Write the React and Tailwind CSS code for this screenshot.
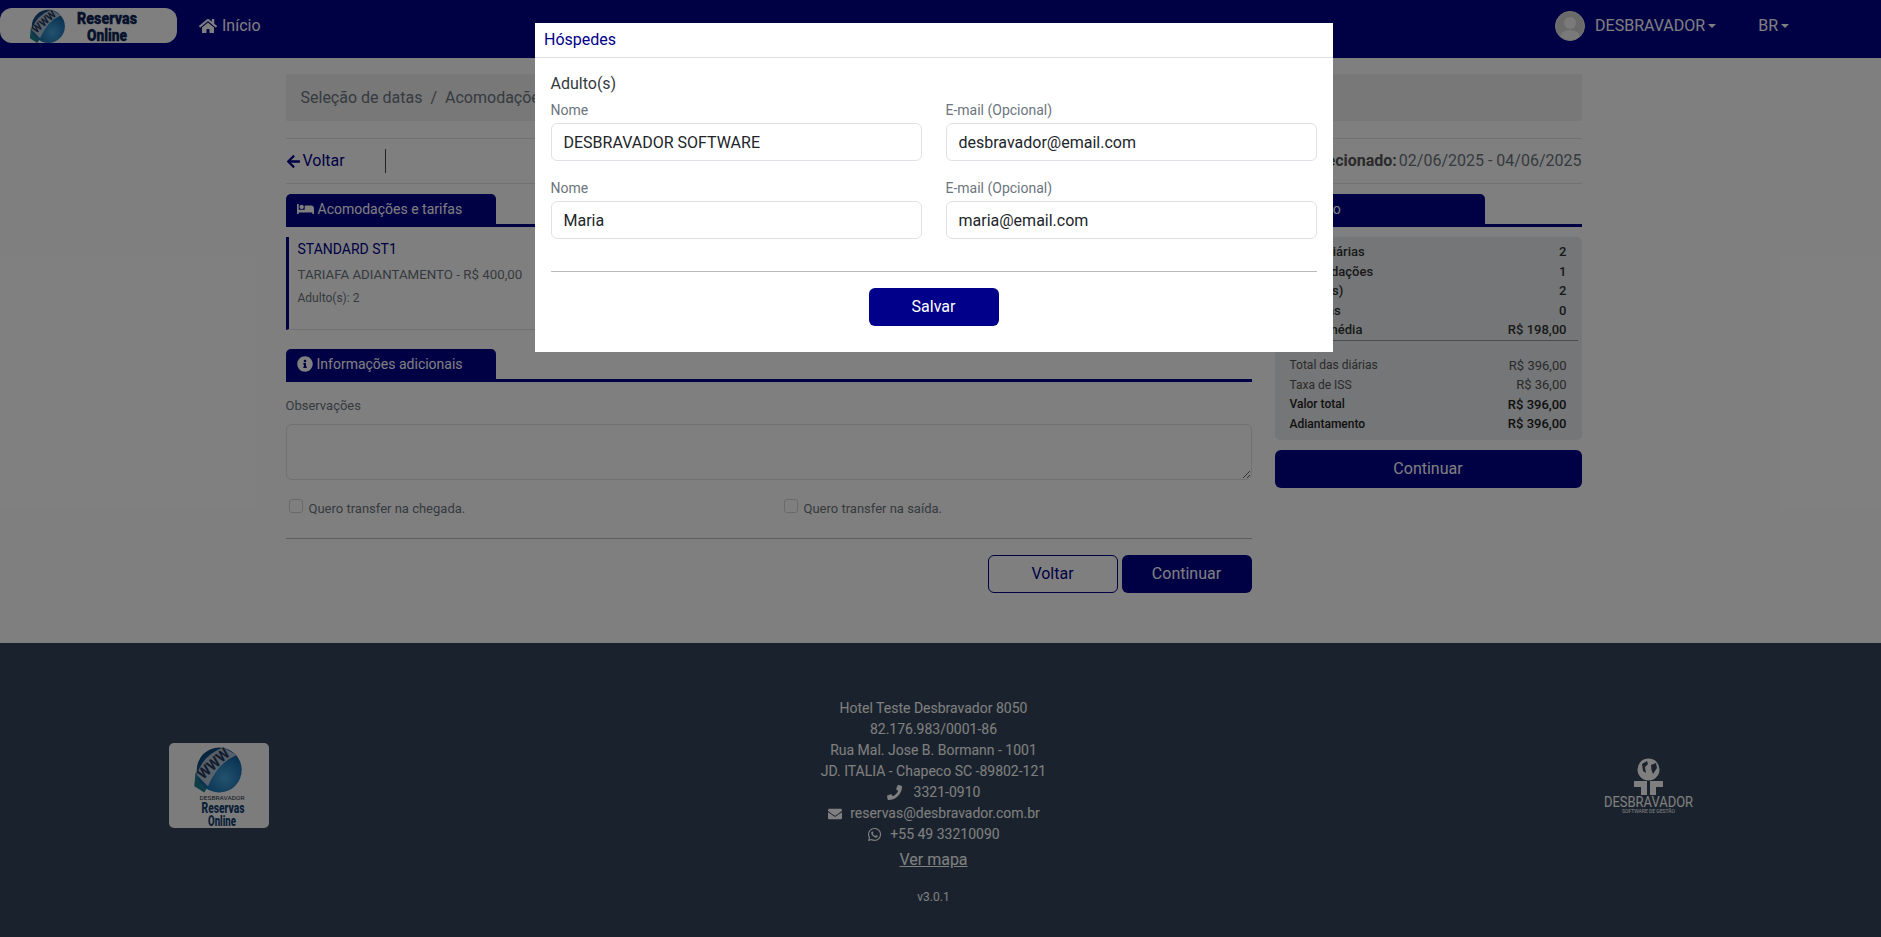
import React from "react";
import { FaHome, FaBed, FaInfoCircle, FaArrowLeft, FaPhone, FaEnvelope, FaWhatsapp } from "react-icons/fa";

function Globe({ id }) {
  return (
    <g>
      <defs>
        <radialGradient id={id} cx="0.62" cy="0.68" r="0.72">
          <stop offset="0" stopColor="#48a6dc" />
          <stop offset="0.6" stopColor="#1a6fae" />
          <stop offset="1" stopColor="#0f3f72" />
        </radialGradient>
      </defs>
      <path d="M2 22 L1 33 L9 38 L14 30 Z" fill="#1c7f8f" />
      <circle cx="21" cy="20" r="18" fill={`url(#${id})`} />
      <path d="M3 24 Q8 8 24 2 L35 8 Q20 14 12 33 Z" fill="#d6dae0" opacity="0.8" />
      <text x="0" y="0" transform="translate(8 28) rotate(-42)" fontFamily="Roboto, sans-serif" fontSize="12" fontWeight="700" fill="#26395c" textLength="30" lengthAdjust="spacingAndGlyphs">WWW</text>
    </g>
  );
}

function HeaderLogo() {
  return (
    <div className="w-[177px] h-[35px] bg-white rounded-[12px] flex items-center">
      <svg width="177" height="35" viewBox="0 0 177 35">
        <g transform="translate(29 0) scale(0.92)"><Globe id="g1" /></g>
        <text x="107" y="16" textAnchor="middle" fontFamily="Roboto, sans-serif" fontSize="17" fontWeight="900" fill="#0d2458" stroke="#0d2458" strokeWidth="0.4" textLength="60" lengthAdjust="spacingAndGlyphs">Reservas</text>
        <text x="107" y="32.5" textAnchor="middle" fontFamily="Roboto, sans-serif" fontSize="17" fontWeight="900" fill="#0d2458" stroke="#0d2458" strokeWidth="0.4" textLength="40" lengthAdjust="spacingAndGlyphs">Online</text>
      </svg>
    </div>
  );
}

function FooterLogo() {
  return (
    <div className="w-[100px] h-[85px] bg-[#f8f9fb] rounded-[5px] mb-[9px]">
      <svg width="100" height="85" viewBox="0 0 100 85">
        <g transform="translate(24 2) scale(1.25)"><Globe id="g2" /></g>
        <text x="53" y="57" textAnchor="middle" fontFamily="Roboto, sans-serif" fontSize="6" fill="#1c2a3c" textLength="45" lengthAdjust="spacingAndGlyphs">DESBRAVADOR</text>
        <text x="54" y="70" textAnchor="middle" fontFamily="Roboto, sans-serif" fontSize="15" fontWeight="900" fill="#14406f" textLength="43" lengthAdjust="spacingAndGlyphs">Reservas</text>
        <text x="53" y="83" textAnchor="middle" fontFamily="Roboto, sans-serif" fontSize="15" fontWeight="900" fill="#14406f" textLength="28" lengthAdjust="spacingAndGlyphs">Online</text>
      </svg>
    </div>
  );
}

function DesbravadorLogo() {
  return (
    <div className="w-[92px] h-[57px] mb-[9px] mr-[3px]">
      <svg width="92" height="57" viewBox="0 0 92 57">
        <circle cx="45.5" cy="12.5" r="11" fill="#fff" />
        <path d="M39 7 L44 4 L45 7 L42 10 L43 16 L40 14 Z M48 8 L53 6 L54 11 L50 17 L48.5 13 Z" fill="#34465a" />
        <path d="M31 24 H44 V38 H38 V30 H31 Z M47 24 H60 V30 H53 V38 H47 Z" fill="#fff" />
        <text x="45.5" y="50" textAnchor="middle" fontFamily="Roboto, sans-serif" fontSize="14" fill="#fff" textLength="89" lengthAdjust="spacingAndGlyphs">DESBRAVADOR</text>
        <text x="45.5" y="56" textAnchor="middle" fontFamily="Roboto, sans-serif" fontSize="5" fill="#fff" textLength="53" lengthAdjust="spacingAndGlyphs">SOFTWARE DE GESTÃO</text>
      </svg>
    </div>
  );
}

function Caret() {
  return <span className="inline-block ml-[3px] w-0 h-0 border-x-[4px] border-x-transparent border-t-[4px] border-t-white align-middle" />;
}

function Tab({ icon, label }) {
  return (
    <div className="border-b-[3px] border-[#00008b] h-[33px]">
      <div className="w-[210px] h-[30px] bg-[#00008b] rounded-t-[5px] flex items-center pl-[11px] gap-[4px] text-white text-[14px]">
        {icon}
        <span>{label}</span>
      </div>
    </div>
  );
}

function Row({ a, b, cls, aCls }) {
  return (
    <div className={"flex justify-between items-center h-[19.5px] text-[13px] " + cls}>
      <span className={aCls}>{a}</span>
      <span>{b}</span>
    </div>
  );
}

function Field({ label, value }) {
  return (
    <div>
      <div className="text-[14px] leading-[21px] text-[#6c757d] mb-[2px]">{label}</div>
      <input readOnly value={value} className="w-full h-[38px] border border-[#dee2e6] rounded-[6px] px-[12px] text-[16px] text-[#212529] bg-white outline-none" />
    </div>
  );
}

export default function App() {
  return (
    <div className="relative bg-white h-[937px] overflow-hidden text-[#212529] font-['Roboto',sans-serif]">
      <header className="h-[58px] bg-[#00008b]">
        <div className="w-[1867px] h-[50px] flex items-center text-white">
          <HeaderLogo />
          <div className="ml-[22px] mt-[1px] flex items-center gap-[5px] text-[16px]">
            <FaHome className="w-[18px] h-[16px]" />
            <span>Início</span>
          </div>
          <div className="ml-auto mt-[1px] flex items-center text-[16px] mr-[78px]">
            <div className="w-[30px] h-[30px] rounded-full bg-[#d5d5d5] border border-[#eee] overflow-hidden">
              <svg width="28" height="28" viewBox="0 0 28 28">
                <circle cx="14" cy="11" r="6" fill="#f5f5f5" />
                <ellipse cx="14" cy="25" rx="10" ry="7" fill="#f5f5f5" />
              </svg>
            </div>
            <span className="ml-[10px]">DESBRAVADOR</span>
            <Caret />
            <span className="ml-[42px]">BR</span>
            <Caret />
          </div>
        </div>
      </header>

      <div className="w-[1867px]">
        <main className="w-[1296px] mx-auto h-[585px] pt-[16px]">
          <div className="h-[47px] bg-[#f0f0f2] flex items-center px-[15px] text-[16px] text-[#6c757d] gap-[8px]">
            <span>Seleção de datas</span>
            <span>/</span>
            <span>Acomodações</span>
            <span>/</span>
            <span>Hóspedes</span>
          </div>

          <div className="mt-[17px] h-[46px] border-y border-[#e4e4e4] flex items-center justify-between text-[16px]">
            <div className="flex items-center text-[#00008b]">
              <FaArrowLeft className="w-[15px] h-[15px] mr-[2px]" />
              <span>Voltar</span>
              <div className="ml-[40px] w-px h-[24px] bg-[#444]" />
            </div>
            <div className="text-[#6c757d]">
              <span className="font-bold text-[#555]">Período selecionado:</span>
              <span className="ml-[2px]">02/06/2025 - 04/06/2025</span>
            </div>
          </div>

          <div className="mt-[10px] flex gap-[23px]">
            <div className="w-[966px]">
              <Tab icon={<FaBed className="w-[17px] h-[14px]" />} label="Acomodações e tarifas" />
              <div className="mt-[10px] h-[93px] border-l-[3px] border-l-[#00008b] border-b border-b-[#e4e4e4] pl-[9px] pt-[2px]">
                <div className="text-[14px] leading-[21px] text-[#00008b]">STANDARD ST1</div>
                <div className="mt-[4px] text-[13.3px] leading-[21px] text-[#6c757d]">TARIAFA ADIANTAMENTO - R$ 400,00</div>
                <div className="mt-[4px] text-[12px] leading-[18px] text-[#6c757d]">Adulto(s): 2</div>
              </div>

              <div className="mt-[19px]">
                <Tab icon={<FaInfoCircle className="w-[16px] h-[16px]" />} label="Informações adicionais" />
              </div>
              <div className="mt-[14px] text-[13px] leading-[20px] text-[#6c757d]">Observações</div>
              <textarea readOnly className="block mt-[8px] w-full h-[56px] border border-[#dee2e6] rounded-[6px] bg-white outline-none" />

              <div className="mt-[19px] grid grid-cols-2 h-[20px] text-[13px] text-[#6c757d]">
                <label className="pl-[3px] flex items-start gap-[6px]">
                  <input type="checkbox" className="appearance-none w-[14px] h-[14px] border border-[#d5d5d5] rounded-[3px]" />
                  <span className="leading-[20px]">Quero transfer na chegada.</span>
                </label>
                <label className="pl-[15px] flex items-start gap-[6px]">
                  <input type="checkbox" className="appearance-none w-[14px] h-[14px] border border-[#d5d5d5] rounded-[3px]" />
                  <span className="leading-[20px]">Quero transfer na saída.</span>
                </label>
              </div>

              <div className="mt-[19px] border-t border-[#bbb]" />
              <div className="mt-[16px] flex justify-end gap-[4px] text-[16px]">
                <button className="w-[130px] h-[38px] border border-[#00008b] rounded-[6px] text-[#00008b]">Voltar</button>
                <button className="w-[130px] h-[38px] bg-[#00008b] rounded-[6px] text-white">Continuar</button>
              </div>
            </div>

            <div className="w-[307px]">
              <div className="border-b-[3px] border-[#00008b] h-[33px]">
                <div className="w-[210px] h-[30px] bg-[#00008b] rounded-t-[5px] flex items-center pl-[15px] text-white text-[14px]">Resumo</div>
              </div>
              <div className="mt-[10px] h-[203px] bg-[#e9ecef] rounded-[5px] pt-[5px]">
                <div className="px-[15px]">
                  <Row a="Nº de diárias" b="2" cls="font-medium text-[#333]" />
                  <Row a="Acomodações" b="1" cls="font-medium text-[#333]" />
                  <Row a="Adulto(s)" b="2" cls="font-medium text-[#333]" />
                  <Row a="Crianças" b="0" cls="font-medium text-[#333]" />
                  <Row a="Diária média" b="R$ 198,00" cls="font-medium text-[#333]" />
                </div>
                <div className="mr-[4px] border-t border-[#999]" />
                <div className="px-[15px] mt-[15px]">
                  <Row a="Total das diárias" b="R$ 396,00" cls="text-[#555]" aCls="text-[12px]" />
                  <Row a="Taxa de ISS" b="R$ 36,00" cls="text-[#555]" aCls="text-[12px]" />
                  <Row a="Valor total" b="R$ 396,00" cls="font-medium text-[#222]" aCls="text-[12px]" />
                  <Row a="Adiantamento" b="R$ 396,00" cls="font-medium text-[#222]" aCls="text-[12px]" />
                </div>
              </div>
              <button className="mt-[10px] w-full h-[38px] bg-[#00008b] rounded-[6px] text-white text-[16px]">Continuar</button>
            </div>
          </div>
        </main>
      </div>

      <footer className="h-[294px] bg-[#34465a] text-white">
        <div className="w-[1867px] h-full px-[169px] grid grid-cols-3">
          <div className="flex items-center"><FooterLogo /></div>
          <div className="flex flex-col items-center pt-[55px] text-[14px] leading-[21px]">
            <div>Hotel Teste Desbravador 8050</div>
            <div>82.176.983/0001-86</div>
            <div>Rua Mal. Jose B. Bormann - 1001</div>
            <div>JD. ITALIA - Chapeco SC -89802-121</div>
            <div className="flex items-center gap-[12px]"><FaPhone className="w-[15px] h-[15px]" /><span>3321-0910</span></div>
            <div className="flex items-center gap-[7px]"><FaEnvelope className="w-[16px] h-[14px]" /><span>reservas@desbravador.com.br</span></div>
            <div className="flex items-center gap-[8px]"><FaWhatsapp className="w-[15px] h-[15px]" /><span>+55 49 33210090</span></div>
            <div className="mt-[3px] text-[16px] leading-[24px] underline">Ver mapa</div>
            <div className="mt-[16px] text-[12px] leading-[18px]">v3.0.1</div>
          </div>
          <div className="flex items-center justify-end"><DesbravadorLogo /></div>
        </div>
      </footer>

      <div className="absolute inset-0 bg-black/50">
        <div className="w-[1867px] flex justify-center pt-[23px]">
          <div className="w-[798px] h-[329px] bg-white">
            <div className="h-[35px] border-b border-[#dee2e6] px-[9.5px] flex items-center text-[16px] text-[#00008b]">Hóspedes</div>
            <div className="px-[16px] pt-[14px]">
              <div className="text-[16px] leading-[24px] text-[#343a40] mb-[4px]">Adulto(s)</div>
              <div className="grid grid-cols-2 gap-x-[24px] gap-y-[17px]">
                <Field label="Nome" value="DESBRAVADOR SOFTWARE" />
                <Field label="E-mail (Opcional)" value="desbravador@email.com" />
                <Field label="Nome" value="Maria" />
                <Field label="E-mail (Opcional)" value="maria@email.com" />
              </div>
              <div className="mt-[32px] border-t border-[#bbb]" />
              <div className="mt-[16px] flex justify-center">
                <button className="w-[130px] h-[38px] bg-[#00008b] rounded-[6px] text-white text-[16px]">Salvar</button>
              </div>
            </div>
          </div>
        </div>
      </div>
    </div>
  );
}
